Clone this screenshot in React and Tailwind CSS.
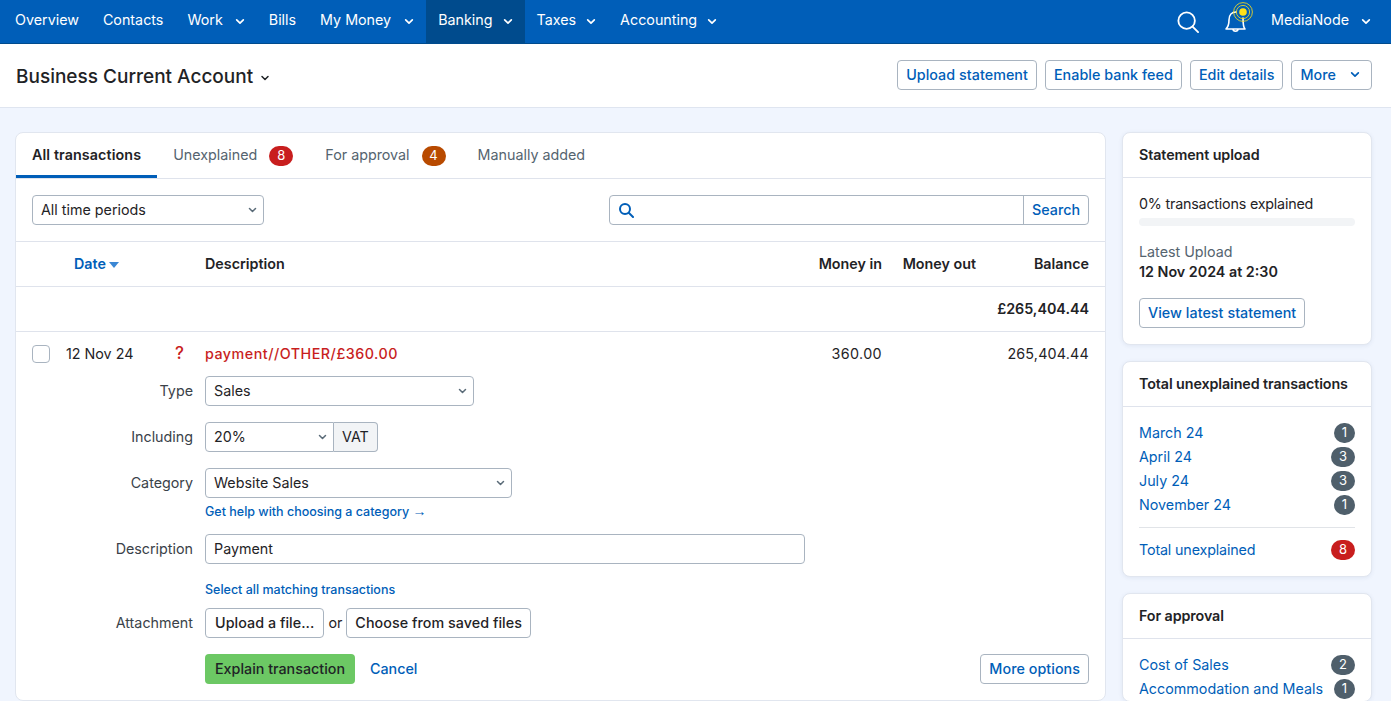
import React from "react";

function Chevron({ className }) {
  return (
    <svg viewBox="0 0 12 8" fill="none" stroke="currentColor" strokeWidth="2" strokeLinecap="round" strokeLinejoin="round" className={className}>
      <path d="M2 2l4 4 4-4" />
    </svg>
  );
}

function NavItem({ label, caret, active, caretGap = "ml-[10px]" }) {
  return (
    <a className={"flex h-full items-center px-3 pb-[3px] text-white " + (active ? "bg-[#004b8d]" : "")}>
      {label}
      {caret && <Chevron className={caretGap + " mt-[3px] h-[7px] w-[10px]"} />}
    </a>
  );
}

function OutlineBtn({ children, className = "", dark }) {
  return (
    <a className={"flex h-[30px] items-center rounded-[4px] border border-[#a9b4c0] bg-white pb-[1px] font-medium tracking-[0.05px] " + (dark ? "text-[#1f2326] " : "text-[#005eb8] ") + (className.includes("px-") ? "" : "px-2 ") + className}>
      {children}
    </a>
  );
}

function FakeSelect({ children, className = "" }) {
  return (
    <div className={"flex h-[30px] items-center justify-between rounded-[4px] border border-[#a9b4c0] bg-white pl-2 pr-[6px] text-[#1f2326] " + className}>
      <span className="pb-[1px]">{children}</span>
      <Chevron className="h-[6px] w-[9px] text-[#5a6b78]" />
    </div>
  );
}

function FormRow({ label, children, className = "" }) {
  return (
    <div className={"flex items-center " + className}>
      <div className="w-[189px] pr-3 text-right text-[#3a4249]">{label}</div>
      {children}
    </div>
  );
}

function Count({ n, red, wide }) {
  return (
    <span className={"flex h-5 items-center justify-center rounded-full text-[13px] text-white " + (wide ? "w-6 " : "w-[21px] ") + (red ? "bg-[#c81e1e]" : "bg-[#4f5f6b]")}>
      {n}
    </span>
  );
}

function SideCard({ title, children, className = "" }) {
  return (
    <section className={"rounded-lg border border-[#e1e6ef] bg-white shadow-[0_1px_4px_rgba(40,70,120,0.08)] " + className}>
      <h3 className="flex h-[45px] items-center border-b border-[#dfe3ec] px-4 pb-[1px] font-semibold tracking-[-0.1px] text-[#1f2326]">{title}</h3>
      <div className="px-4">{children}</div>
    </section>
  );
}

function SideLink({ label, n, wide, red }) {
  return (
    <div className="flex h-6 items-center justify-between">
      <a className="pb-[1px] text-[#005eb8]">{label}</a>
      <Count n={n} wide={wide} red={red} />
    </div>
  );
}

export default function App() {
  return (
    <div className="flex h-[701px] flex-col overflow-hidden bg-[#f0f5fe] font-['Inter','Liberation_Sans',sans-serif] text-[14.3px] text-[#1f2326]">
      <nav className="flex h-[44px] shrink-0 items-center border-b border-[#004b8d] bg-[#005eb8] pl-[3px] pr-[20px]">
        <NavItem label="Overview" />
        <NavItem label="Contacts" />
        <NavItem label="Work" caret caretGap="ml-[12px]" />
        <NavItem label="Bills" />
        <NavItem label="My Money" caret caretGap="ml-[13px]" />
        <NavItem label="Banking" caret active />
        <NavItem label="Taxes" caret />
        <NavItem label="Accounting" caret />
        <div className="ml-auto flex items-center text-white">
          <svg viewBox="0 0 24 24" fill="none" stroke="currentColor" strokeWidth="2" strokeLinecap="round" className="h-[22px] w-[22px]">
            <circle cx="10.5" cy="10.5" r="9" />
            <path d="M17 17l6 6" />
          </svg>
          <svg viewBox="0 0 30 40" fill="none" className="ml-[25px] h-[40px] w-[30px]">
            <path d="M2 27c2-2 3-4 3-9 0-5 3-8 7-8M19 16c0 5 0 9 2 11H2M9 27c0 3 5 3 5 0" stroke="#fff" strokeWidth="1.6" strokeLinecap="round" strokeLinejoin="round" />
            <circle cx="19" cy="10" r="3.8" fill="#ffe11a" />
            <circle cx="19" cy="10" r="6.6" stroke="#ffe11a" strokeWidth="0.8" />
            <circle cx="19" cy="10" r="9.4" stroke="#ffe11a" strokeWidth="0.8" />
          </svg>
          <span className="ml-[17px] pb-[3px]">MediaNode</span>
          <Chevron className="ml-[12px] h-[7px] w-[10px]" />
        </div>
      </nav>

      <header className="flex h-[64px] shrink-0 items-center justify-between border-b border-[#dfe5f0] bg-white pl-[16px] pr-[19px]">
        <h1 className="flex items-center pt-[3px] text-[19px] font-medium text-[#1f2326]">
          Business Current Account
          <Chevron className="ml-[7px] mt-[2px] h-[6px] w-[10px]" />
        </h1>
        <div className="mb-[2px] flex gap-2">
          <OutlineBtn className="pt-[1px]">Upload statement</OutlineBtn>
          <OutlineBtn className="pt-[1px]">Enable bank feed</OutlineBtn>
          <OutlineBtn className="pt-[1px]">Edit details</OutlineBtn>
          <OutlineBtn className="pt-[1px]">
            More
            <Chevron className="ml-[14px] mr-[3px] h-[7px] w-[10px]" />
          </OutlineBtn>
        </div>
      </header>

      <div className="flex items-start gap-4 pl-[15px] pt-6">
        <main className="w-[1091px] shrink-0 rounded-lg border border-[#e1e6ef] bg-white">
          <div className="flex h-[46px] items-stretch border-b border-[#dfe3ec] text-[#55646f]">
            <a className="flex items-center border-b-[3px] border-[#005eb8] px-4 pt-[1px] font-semibold tracking-[0.1px] text-[#1f2326]">All transactions</a>
            <a className="ml-4 flex items-center">
              <span className="pb-[1px]">Unexplained</span>
              <span className="ml-3 flex h-5 w-6 items-center justify-center rounded-full bg-[#c81e1e] text-[13px] text-white">8</span>
            </a>
            <a className="ml-8 flex items-center">
              <span className="pb-[1px]">For approval</span>
              <span className="ml-3 flex h-5 w-6 items-center justify-center rounded-full bg-[#b84a00] text-[13px] text-white">4</span>
            </a>
            <a className="ml-8 flex items-center pb-[1px]">Manually added</a>
          </div>

          <div className="flex h-[63px] items-center justify-between border-b border-[#dfe3ec] px-4">
            <FakeSelect className="w-[232px]">All time periods</FakeSelect>
            <div className="flex h-[30px] w-[480px] rounded-[4px] border border-[#a9b4c0]">
              <div className="flex flex-1 items-center pl-2 text-[#005eb8]">
                <svg viewBox="0 0 16 16" fill="none" stroke="currentColor" strokeWidth="2" strokeLinecap="round" className="h-[16px] w-[16px]">
                  <circle cx="7" cy="7" r="5" />
                  <path d="M11 11l4 4" />
                </svg>
              </div>
              <a className="flex items-center border-l border-[#a9b4c0] px-2 pb-[1px] font-medium text-[#005eb8]">Search</a>
            </div>
          </div>

          <div className="flex h-[45px] items-center border-b border-[#dfe3ec] pb-[1px] pr-4 font-semibold text-[#1f2326]">
            <a className="ml-[58px] flex w-[131px] items-center text-[#005eb8]">
              Date
              <svg viewBox="0 0 10 6" className="ml-[3px] mt-[2px] h-[6px] w-[10px]"><path d="M0 0h10L5 6z" fill="#3b87d4" /></svg>
            </a>
            <span className="flex-1">Description</span>
            <span className="w-[80px] text-right">Money in</span>
            <span className="w-[94px] text-right">Money out</span>
            <span className="w-[113px] text-right">Balance</span>
          </div>

          <div className="flex h-[45px] items-center justify-end border-b border-[#dfe3ec] pb-[1px] pr-4 font-semibold">£265,404.44</div>

          <div className="flex h-[44px] items-center pr-4">
            <span className="ml-4 h-[18px] w-[18px] rounded-[4px] border border-[#a9b4c0]" />
            <span className="ml-4 w-[109px] pb-[1px]">12 Nov 24</span>
            <span className="w-[30px] pb-[1px] text-[17px] font-medium text-[#c81e1e]">?</span>
            <span className="flex-1 pb-[1px] font-medium tracking-[0.5px] text-[#c81e1e]">payment//OTHER/£360.00</span>
            <span className="w-[80px] pb-[1px] text-right tracking-[0.4px]">360.00</span>
            <span className="w-[207px] pb-[1px] text-right tracking-[0.2px]">265,404.44</span>
          </div>

          <div className="flex flex-col pr-4">
            <FormRow label="Type"><FakeSelect className="w-[269px]">Sales</FakeSelect></FormRow>
            <FormRow label="Including" className="mt-4">
              <FakeSelect className="w-[129px] rounded-r-none">20%</FakeSelect>
              <span className="flex h-[30px] items-center rounded-r-[4px] border border-l-0 border-[#a9b4c0] bg-[#f2f4f6] px-2 pb-[1px]">VAT</span>
            </FormRow>
            <FormRow label="Category" className="mt-4"><FakeSelect className="w-[307px]">Website Sales</FakeSelect></FormRow>
            <a className="ml-[189px] mt-[5px] h-[17px] text-[12.5px] font-medium leading-[17px] text-[#005eb8]">
              Get help with choosing a category <span className="font-['Liberation_Sans',sans-serif] text-[14px]">→</span>
            </a>
            <FormRow label="Description" className="mt-[14px]">
              <div className="flex h-[30px] w-[600px] items-center rounded-[4px] border border-[#a9b4c0] px-2 pb-[1px]">Payment</div>
            </FormRow>
            <a className="ml-[189px] mt-[17px] h-[17px] text-[12.5px] font-medium leading-[17px] text-[#005eb8]">Select all matching transactions</a>
            <FormRow label="Attachment" className="mt-[10px]">
              <OutlineBtn dark className="px-[9px]">Upload a file...</OutlineBtn>
              <span className="mx-1 pb-[1px]">or</span>
              <OutlineBtn dark>Choose from saved files</OutlineBtn>
            </FormRow>
            <div className="mt-4 flex items-center pl-[189px]">
              <a className="flex h-[30px] items-center rounded-[4px] bg-[#6cc864] px-[10px] pb-[1px] font-medium text-[#1f2326]">Explain transaction</a>
              <a className="ml-[15px] pb-[1px] font-medium text-[#005eb8]">Cancel</a>
              <OutlineBtn className="ml-auto">More options</OutlineBtn>
            </div>
          </div>
          <div className="h-4" />
        </main>

        <aside className="flex w-[250px] shrink-0 flex-col gap-4">
          <SideCard title="Statement upload">
            <p className="mt-4 leading-[20px] tracking-[-0.2px]">0% transactions explained</p>
            <div className="mt-[4px] h-2 rounded-full bg-[#f2f4f6]" />
            <p className="mt-[16px] leading-[20px] text-[#55646f]">Latest Upload</p>
            <p className="font-semibold leading-[20px]">12 Nov 2024 at 2:30</p>
            <OutlineBtn className="mb-4 mt-4 w-fit">View latest statement</OutlineBtn>
          </SideCard>
          <SideCard title="Total unexplained transactions">
            <div className="pt-[14px]">
              <SideLink label="March 24" n="1" />
              <SideLink label="April 24" n="3" wide />
              <SideLink label="July 24" n="3" wide />
              <SideLink label="November 24" n="1" />
            </div>
            <div className="mt-[10px] flex h-[45px] items-center justify-between border-t border-[#e1e4e8]">
              <a className="pb-[1px] tracking-[-0.15px] text-[#005eb8]">Total unexplained</a>
              <Count n="8" red wide />
            </div>
            <div className="h-[4px]" />
          </SideCard>
          <SideCard title="For approval">
            <div className="pt-[14px]">
              <SideLink label="Cost of Sales" n="2" wide />
              <SideLink label="Accommodation and Meals" n="1" />
            </div>
          </SideCard>
        </aside>
      </div>
    </div>
  );
}
